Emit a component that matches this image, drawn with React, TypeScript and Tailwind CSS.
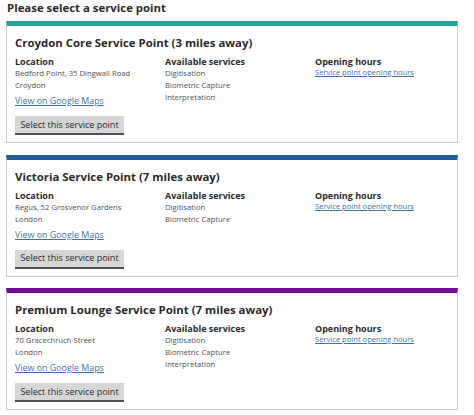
import React from "react";

const points = [
  {
    name: "Croydon Core Service Point (3 miles away)",
    bar: "border-t-[#28a197]",
    address: ["Bedford Point, 35 Dingwall Road", "Croydon"],
    services: ["Digitisation", "Biometric Capture", "Interpretation"],
  },
  {
    name: "Victoria Service Point (7 miles away)",
    bar: "border-t-[#1d5a96]",
    address: ["Regus, 52 Grosvenor Gardens", "London"],
    services: ["Digitisation", "Biometric Capture"],
  },
  {
    name: "Premium Lounge Service Point (7 miles away)",
    bar: "border-t-[#740c98]",
    address: ["70 Gracechruch Street", "London"],
    services: ["Digitisation", "Biometric Capture", "Interpretation"],
  },
];

export default function App() {
  return (
    <div className="w-[474px] h-[415px] bg-white text-[#2b2b2b] font-['Open_Sans',sans-serif] overflow-hidden">
      <h1 className="pl-[7px] text-[11.4px] leading-[16px] font-bold">Please select a service point</h1>

      <div className="mt-[5px] flex flex-col gap-[11.5px] pl-[6px] w-[458px]">
        {points.map((p) => (
          <div key={p.name} className={`h-[122px] border border-[#c9c9c9] border-t-[5px] ${p.bar} px-[8px]`}>
            <h2 className="mt-[9px] text-[11.4px] leading-[16px] font-bold">{p.name}</h2>
            <div className="mt-[5px] grid grid-cols-[150px_150px_1fr]">
              <div>
                <div className="text-[9px] leading-[11px] font-bold">Location</div>
                {p.address.map((a) => (
                  <div key={a} className="text-[7.7px] leading-[12px] text-[#505050]">{a}</div>
                ))}
                <a href="#" className="block mt-[4px] text-[8.9px] leading-[12px] text-[#3d72a6] underline">
                  View on Google Maps
                </a>
                <button className="block mt-[9px] h-[19px] w-[109px] bg-[#d6d6d6] border-b-2 border-[#4a5256] text-[9px] leading-[16px] text-[#2b2b2b]">
                  Select this service point
                </button>
              </div>
              <div>
                <div className="text-[9px] leading-[11px] font-bold">Available services</div>
                {p.services.map((s) => (
                  <div key={s} className="text-[7.7px] leading-[12px] text-[#505050]">{s}</div>
                ))}
              </div>
              <div>
                <div className="text-[9px] leading-[11px] font-bold">Opening hours</div>
                <a href="#" className="block text-[7.6px] leading-[11px] text-[#3d72a6] underline">
                  Service point opening hours
                </a>
              </div>
            </div>
          </div>
        ))}
      </div>
    </div>
  );
}
